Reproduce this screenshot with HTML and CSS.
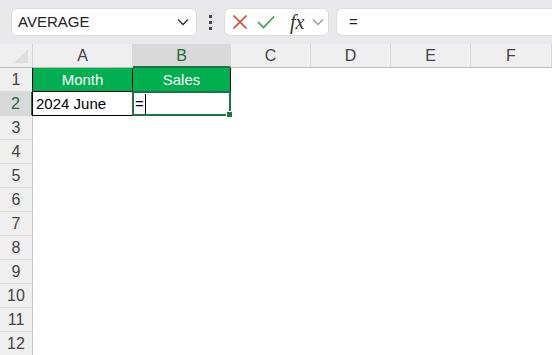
FILE: index.html
```html
<!DOCTYPE html>
<html lang="en">
<head>
  <meta charset="UTF-8">
  <title>Sheet</title>
  <link rel="stylesheet" href="styles.css">
</head>
<body>

<div class="toolbar">
  <div class="namebox">
    <span>AVERAGE</span>
    <svg class="chev" width="12" height="8" viewBox="0 0 12 8"><path d="M1 1.5 L6 6.5 L11 1.5" fill="none" stroke="#333" stroke-width="1.4"/></svg>
  </div>
  <div class="dots"><i></i><i></i><i></i></div>
  <div class="fxbox">
    <svg width="16" height="16" viewBox="0 0 16 16"><path d="M1.5 1.5 L14.5 14.5 M14.5 1.5 L1.5 14.5" stroke="#e0393e" stroke-width="1.6"/></svg>
    <svg width="18" height="14" viewBox="0 0 18 14"><path d="M1 7 L6.5 12.5 L17 1.5" fill="none" stroke="#3b9c4a" stroke-width="1.6"/></svg>
    <span class="fx">fx</span>
    <svg width="12" height="8" viewBox="0 0 12 8"><path d="M1 1.5 L6 6.5 L11 1.5" fill="none" stroke="#9a9a9a" stroke-width="1.3"/></svg>
  </div>
  <div class="formula">=</div>
</div>

<div class="sheet">
  <div class="corner"><div class="tri"></div></div>
  <div class="colhead">A</div>
  <div class="colhead sel">B</div>
  <div class="colhead">C</div>
  <div class="colhead">D</div>
  <div class="colhead">E</div>
  <div class="colhead">F</div>

  <div class="rowhead">1</div>
  <div class="cell head a">Month</div>
  <div class="cell head b">Sales</div>
  <div class="cell"></div><div class="cell"></div><div class="cell"></div><div class="cell"></div>

  <div class="rowhead sel">2</div>
  <div class="cell data a">2024 June</div>
  <div class="cell data b active"><span>=</span><span class="caret"></span><div class="handle"></div></div>
  <div class="cell"></div><div class="cell"></div><div class="cell"></div><div class="cell"></div>

  <div class="rowhead">3</div><div class="cell"></div><div class="cell"></div><div class="cell"></div><div class="cell"></div><div class="cell"></div><div class="cell"></div>
  <div class="rowhead">4</div><div class="cell"></div><div class="cell"></div><div class="cell"></div><div class="cell"></div><div class="cell"></div><div class="cell"></div>
  <div class="rowhead">5</div><div class="cell"></div><div class="cell"></div><div class="cell"></div><div class="cell"></div><div class="cell"></div><div class="cell"></div>
  <div class="rowhead">6</div><div class="cell"></div><div class="cell"></div><div class="cell"></div><div class="cell"></div><div class="cell"></div><div class="cell"></div>
  <div class="rowhead">7</div><div class="cell"></div><div class="cell"></div><div class="cell"></div><div class="cell"></div><div class="cell"></div><div class="cell"></div>
  <div class="rowhead">8</div><div class="cell"></div><div class="cell"></div><div class="cell"></div><div class="cell"></div><div class="cell"></div><div class="cell"></div>
  <div class="rowhead">9</div><div class="cell"></div><div class="cell"></div><div class="cell"></div><div class="cell"></div><div class="cell"></div><div class="cell"></div>
  <div class="rowhead">10</div><div class="cell"></div><div class="cell"></div><div class="cell"></div><div class="cell"></div><div class="cell"></div><div class="cell"></div>
  <div class="rowhead">11</div><div class="cell"></div><div class="cell"></div><div class="cell"></div><div class="cell"></div><div class="cell"></div><div class="cell"></div>
  <div class="rowhead">12</div><div class="cell"></div><div class="cell"></div><div class="cell"></div><div class="cell"></div><div class="cell"></div><div class="cell"></div>
</div>

</body>
</html>
```

FILE: styles.css
```css
body {
  margin: 0;
  padding: 0;
  font-family: "Liberation Sans", Arial, sans-serif;
  background: #fff;
  width: 552px;
  height: 355px;
  overflow: hidden;
}
.toolbar {
  height: 44px;
  background-color: #e9e8ea;
  display: flex;
  align-items: center;
  padding-left: 11px;
  box-sizing: border-box;
}
.namebox {
  width: 186px;
  height: 28px;
  margin-top: -1px;
  box-sizing: border-box;
  background: white;
  border: 1px solid #dcdcdc;
  border-radius: 6px;
  display: flex;
  align-items: center;
  justify-content: space-between;
  padding: 0 7px 0 6px;
  font-size: 15px;
  color: #222;
}
.dots {
  width: 27px;
  display: flex;
  flex-direction: column;
  align-items: center;
  gap: 3px;
}
.dots i {
  width: 3px;
  height: 3px;
  background: #444;
}
.fxbox {
  width: 105px;
  height: 28px;
  margin-top: -1px;
  box-sizing: border-box;
  background: white;
  border: 1px solid #dcdcdc;
  border-radius: 6px;
  display: flex;
  align-items: center;
  padding-left: 7px;
  gap: 9px;
}
.fxbox .fx {
  font-family: "Liberation Serif", "Times New Roman", serif;
  font-style: italic;
  font-size: 20px;
  color: #333;
  margin-left: 6px;
  margin-right: -1px;
  line-height: 1;
}
.formula {
  flex: 1;
  height: 28px;
  margin-top: -1px;
  margin-left: 7px;
  box-sizing: border-box;
  background: white;
  border: 1px solid #dcdcdc;
  border-right: none;
  border-radius: 6px 0 0 6px;
  padding-left: 12px;
  font-size: 15px;
  line-height: 26px;
  color: #222;
}
.sheet {
  display: grid;
  grid-template-columns: 33px 100px 98px 80px 80px 80px 81px;
  grid-template-rows: 24px;
  grid-auto-rows: 24px;
}
.corner {
  background: #efefef;
  border-right: 1px solid #d4d4d4;
  border-bottom: 1px solid #bdbdbd;
  position: relative;
}
.corner .tri {
  position: absolute;
  right: 4px;
  bottom: 4px;
  width: 0;
  height: 0;
  border-left: 14px solid transparent;
  border-bottom: 14px solid #dedede;
}
.colhead {
  background: #efefef;
  border-right: 1px solid #d8d8d8;
  border-bottom: 1px solid #bdbdbd;
  font-size: 16px;
  color: #444;
  text-align: center;
  line-height: 24px;
}
.colhead.sel {
  background: #d9d9d9;
  border-bottom: 2px solid #217346;
  color: #1e6b40;
  line-height: 23px;
}
.rowhead {
  background: #efefef;
  border-right: 1px solid #c6c6c6;
  border-bottom: 1px solid #dadada;
  font-size: 16px;
  color: #444;
  text-align: center;
  line-height: 24px;
}
.rowhead.sel {
  background: #d9d9d9;
  border-right: 2px solid #217346;
  color: #1e6b40;
}
.cell {
  font-size: 15px;
  line-height: 23px;
  color: #000;
}
.cell.head {
  background: #00b050;
  color: white;
  text-align: center;
  border-right: 1px solid #000;
}
.cell.data {
  border-bottom: 1px solid #000;
  border-top: 1px solid #000;
  padding-left: 3px;
  line-height: 22px;
}
.cell.head.a, .cell.data.a {
  border-left: 1px solid #000;
  margin-left: -1px;
}
.cell.data.a {
  border-right: 1px solid #000;
  margin-top: -1px;
  line-height: 24px;
}
.cell.active {
  position: relative;
  margin-top: -1px;
  margin-left: -1px;
  border: 2px solid #217346;
  padding-left: 1px;
  display: flex;
  align-items: center;
}
.caret {
  display: inline-block;
  width: 1px;
  height: 20px;
  background: #000;
  margin-left: 1px;
}
.handle {
  position: absolute;
  right: -4px;
  bottom: -4px;
  width: 5px;
  height: 5px;
  background: #217346;
  border: 1px solid white;
}
```
